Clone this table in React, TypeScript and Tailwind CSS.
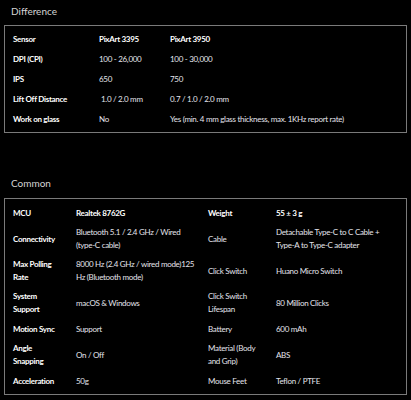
import React from "react";

const L = ({ children }: { children: React.ReactNode }) => (
  <div className="flex items-center py-[3px] font-bold text-white">{children}</div>
);
const V = ({ children, bold }: { children: React.ReactNode; bold?: boolean }) => (
  <div className={"flex items-center py-[3px] " + (bold ? "font-bold text-white" : "text-[#e4e4ec]")}>{children}</div>
);

export default function App() {
  return (
    <div
      className="w-[411px] h-[400px] bg-black px-[4px] pt-[4px] text-[8px] leading-[13px] tracking-[-0.3px] overflow-hidden"
      style={{ fontFamily: "Lato, 'Open Sans', sans-serif" }}
    >
      <p className="ml-[7px] text-[10px] leading-[14px] tracking-normal text-[#d4d4d4]">Difference</p>
      <div className="mt-[7px] h-[108px] border border-[#7a7a7a] pl-[8px] py-[3px]">
        <div className="grid grid-cols-[86px_71px_1fr] auto-rows-[20px]">
          <L>Sensor</L>
          <V bold>PixArt 3395</V>
          <V bold>PixArt 3950</V>
          <L>DPI (CPI)</L>
          <V>100 - 26,000</V>
          <V>100 - 30,000</V>
          <L>IPS</L>
          <V>650</V>
          <V>750</V>
          <L>Lift Off Distance</L>
          <V><span className="ml-[2px]">1.0 / 2.0 mm</span></V>
          <V>0.7 / 1.0 / 2.0 mm</V>
          <L>Work on glass</L>
          <V>No</V>
          <V>Yes (min. 4 mm glass thickness, max. 1KHz report rate)</V>
        </div>
      </div>

      <p className="mt-[43px] ml-[7px] text-[10px] leading-[14px] tracking-normal text-[#d4d4d4]">Common</p>
      <div className="mt-[8px] h-[197px] border border-[#7a7a7a] pl-[8px] py-[4px]">
        <div className="grid grid-cols-[63px_132px_68px_1fr] grid-rows-[20px_32px_32px_32px_20px_32px_20px]">
          <L>MCU</L>
          <V bold>Realtek 8762G</V>
          <L>Weight</L>
          <V bold>55 ± 3 g</V>

          <L>Connectivity</L>
          <V><span>Bluetooth 5.1 / 2.4 GHz / Wired<br />(type-C cable)</span></V>
          <V>Cable</V>
          <V><span>Detachable Type-C to C Cable +<br />Type-A to Type-C adapter</span></V>

          <L><span>Max Polling<br />Rate</span></L>
          <V><span>8000 Hz (2.4 GHz / wired mode)125<br />Hz (Bluetooth mode)</span></V>
          <V>Click Switch</V>
          <V>Huano Micro Switch</V>

          <L><span>System<br />Support</span></L>
          <V>macOS &amp; Windows</V>
          <V><span>Click Switch<br />Lifespan</span></V>
          <V>80 Million Clicks</V>

          <L>Motion Sync</L>
          <V>Support</V>
          <V>Battery</V>
          <V>600 mAh</V>

          <L><span>Angle<br />Snapping</span></L>
          <V>On / Off</V>
          <V><span>Material (Body<br />and Grip)</span></V>
          <V>ABS</V>

          <L>Acceleration</L>
          <V>50g</V>
          <V>Mouse Feet</V>
          <V>Teflon / PTFE</V>
        </div>
      </div>
    </div>
  );
}
